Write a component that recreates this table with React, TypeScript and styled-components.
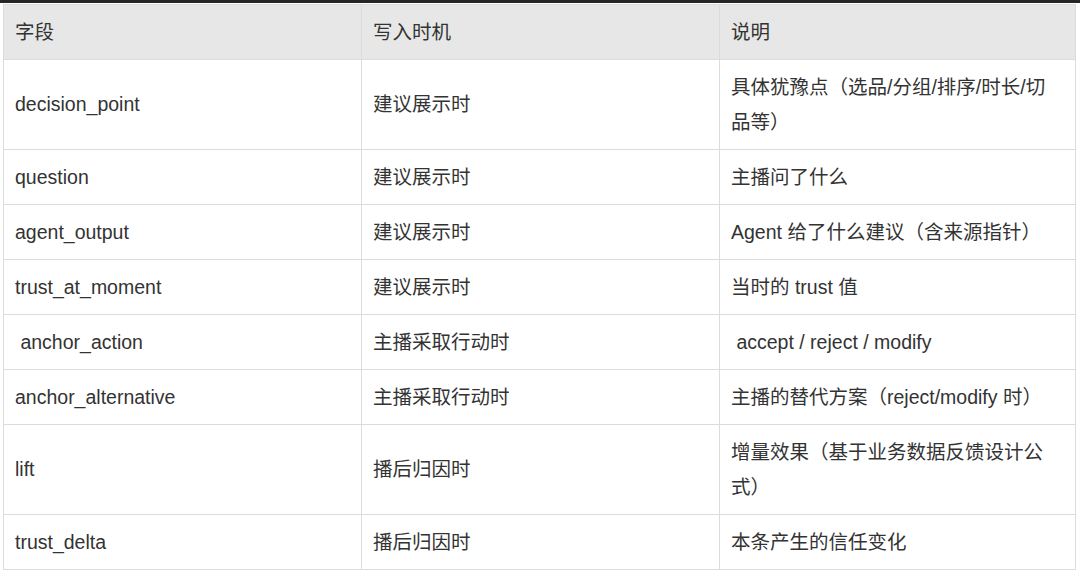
import React from 'react'
import styled, { createGlobalStyle } from 'styled-components'

type Row = {
  field: string
  timing: string
  note: React.ReactNode
}

const rows: Row[] = [
  { field: 'decision_point', timing: '建议展示时', note: '具体犹豫点（选品/分组/排序/时长/切品等）' },
  { field: 'question', timing: '建议展示时', note: '主播问了什么' },
  { field: 'agent_output', timing: '建议展示时', note: 'Agent 给了什么建议（含来源指针）' },
  { field: 'trust_at_moment', timing: '建议展示时', note: '当时的 trust 值' },
  { field: '\u00a0anchor_action', timing: '主播采取行动时', note: '\u00a0accept / reject / modify' },
  { field: 'anchor_alternative', timing: '主播采取行动时', note: '主播的替代方案（reject/modify 时）' },
  { field: 'lift', timing: '播后归因时', note: '增量效果（基于业务数据反馈设计公式）' },
  { field: 'trust_delta', timing: '播后归因时', note: '本条产生的信任变化' },
]

function App() {
  return (
    <>
      <GlobalStyle />
      <Page>
        <TopBar />
        <TableWrap>
          <Table>
            <colgroup>
              <col style={{ width: 358 }} />
              <col style={{ width: 358 }} />
              <col />
            </colgroup>
            <thead>
              <tr>
                <HeadCell>字段</HeadCell>
                <HeadCell>写入时机</HeadCell>
                <HeadCell>说明</HeadCell>
              </tr>
            </thead>
            <tbody>
              {rows.map((row) => (
                <tr key={row.field}>
                  <Cell>{row.field}</Cell>
                  <Cell>{row.timing}</Cell>
                  <Cell>{row.note}</Cell>
                </tr>
              ))}
            </tbody>
          </Table>
        </TableWrap>
      </Page>
    </>
  )
}

const GlobalStyle = createGlobalStyle`
  body {
    margin: 0;
    background: #ffffff;
    font-family: "Liberation Sans", "Noto Sans CJK SC", sans-serif;
  }
`

const Page = styled.div`
  width: 1080px;
  height: 573px;
  overflow: hidden;
  background: #ffffff;
`

const TopBar = styled.div`
  height: 3px;
  background: #262626;
`

const TableWrap = styled.div`
  padding: 1px 3px 0 3px;
`

const Table = styled.table`
  width: 1073px;
  border-collapse: collapse;
  table-layout: fixed;
  color: #333333;
  font-size: 19.5px;
`

const HeadCell = styled.th`
  background: #e6e7e6;
  border: 1px solid #dcdcdc;
  padding: 9.5px 11px;
  line-height: 35px;
  font-weight: normal;
  text-align: left;
`

const Cell = styled.td`
  border: 1px solid #dcdcdc;
  padding: 9.5px 11px;
  line-height: 35px;
  vertical-align: middle;
  white-space: pre-wrap;
`

export default App
